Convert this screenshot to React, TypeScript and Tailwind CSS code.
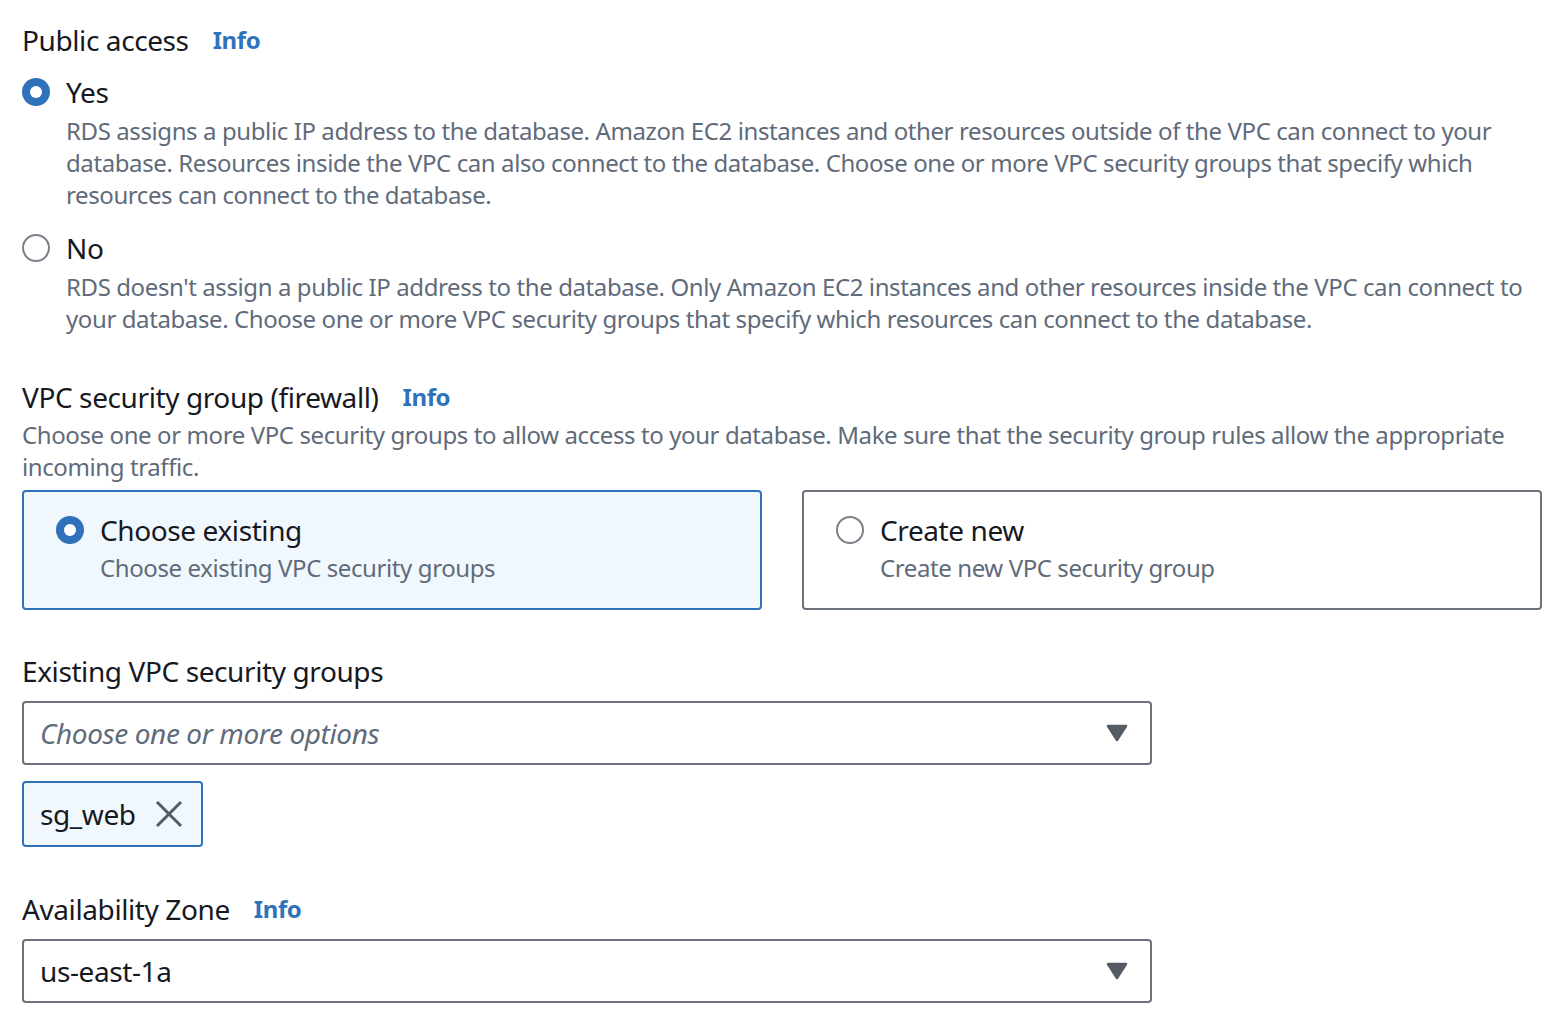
import React from "react";

function Radio({ checked }: { checked: boolean }) {
  return checked ? (
    <span className="flex h-[28px] w-[28px] shrink-0 items-center justify-center rounded-full bg-[#2f72bb]">
      <span className="h-[12px] w-[12px] rounded-full bg-white" />
    </span>
  ) : (
    <span className="h-[28px] w-[28px] shrink-0 rounded-full border-2 border-[#7a818b] bg-white" />
  );
}

function Caret() {
  return (
    <svg width="22" height="18" viewBox="0 0 22 18">
      <path d="M2 2 L20 2 L11 16 Z" fill="#545b64" stroke="#545b64" strokeWidth="2.5" strokeLinejoin="round" />
    </svg>
  );
}

function Info() {
  return <span className="ml-[24px] text-[24px] font-bold text-[#2f72bb]">Info</span>;
}

export default function App() {
  return (
    <div
      className="h-[1032px] w-[1568px] overflow-hidden bg-white pl-[22px] pr-[26px] pt-[20px] tracking-[-0.025em] text-[#16191f]"
      style={{ fontFamily: '"Noto Sans", sans-serif' }}
    >
      <div className="flex h-[40px] items-center text-[28px] leading-[40px]">
        Public access
        <Info />
      </div>

      <div className="mt-[12px] flex h-[40px] items-center gap-[16px] text-[28px]">
        <Radio checked />
        <span>Yes</span>
      </div>
      <p className="mt-[3px] pl-[44px] text-[24px] leading-[32px] text-[#5f6b7a]">
        RDS assigns a public IP address to the database. Amazon EC2 instances and other resources outside of the VPC can connect to your database. Resources inside the VPC can also connect to the database. Choose one or more VPC security groups that specify which resources can connect to the database.
      </p>

      <div className="mt-[17px] flex h-[40px] items-center gap-[16px] text-[28px]">
        <Radio checked={false} />
        <span>No</span>
      </div>
      <p className="mt-[3px] pl-[44px] text-[24px] leading-[32px] text-[#5f6b7a]">
        RDS doesn't assign a public IP address to the database. Only Amazon EC2 instances and other resources inside the VPC can connect to your database. Choose one or more VPC security groups that specify which resources can connect to the database.
      </p>

      <div className="mt-[42px] flex h-[40px] items-center text-[28px]">
        VPC security group (firewall)
        <Info />
      </div>
      <p className="mt-[2px] text-[24px] leading-[32px] text-[#5f6b7a]">
        Choose one or more VPC security groups to allow access to your database. Make sure that the security group rules allow the appropriate incoming traffic.
      </p>

      <div className="mt-[7px] grid grid-cols-2 gap-[40px]">
        <div className="h-[120px] rounded-[4px] border-2 border-[#2f72bb] bg-[#f1f8fd] pl-[32px] pt-[18px]">
          <div className="flex h-[40px] items-center gap-[16px] text-[28px]">
            <Radio checked />
            <span>Choose existing</span>
          </div>
          <div className="mt-[2px] pl-[44px] text-[24px] leading-[32px] text-[#5f6b7a]">
            Choose existing VPC security groups
          </div>
        </div>
        <div className="h-[120px] rounded-[4px] border-2 border-[#6b727c] bg-white pl-[32px] pt-[18px]">
          <div className="flex h-[40px] items-center gap-[16px] text-[28px]">
            <Radio checked={false} />
            <span>Create new</span>
          </div>
          <div className="mt-[2px] pl-[44px] text-[24px] leading-[32px] text-[#5f6b7a]">
            Create new VPC security group
          </div>
        </div>
      </div>

      <div className="mt-[41px] flex h-[40px] items-center text-[28px]">Existing VPC security groups</div>
      <div className="mt-[10px] flex h-[64px] w-[1130px] items-center justify-between rounded-[4px] border-2 border-[#6b727c] pl-[16px] pr-[22px]">
        <span className="text-[28px] italic text-[#5f6b7a]">Choose one or more options</span>
        <Caret />
      </div>
      <div className="mt-[16px] flex h-[66px] w-[181px] items-center justify-between rounded-[4px] border-2 border-[#2f72bb] bg-[#f1f8fd] pl-[16px] pr-[18px]">
        <span className="text-[28px]">sg_web</span>
        <svg width="28" height="28" viewBox="0 0 28 28">
          <path d="M2 2 L26 26 M26 2 L2 26" stroke="#545b64" strokeWidth="3" />
        </svg>
      </div>

      <div className="mt-[42px] flex h-[40px] items-center text-[28px]">
        Availability Zone
        <Info />
      </div>
      <div className="mt-[10px] flex h-[64px] w-[1130px] items-center justify-between rounded-[4px] border-2 border-[#6b727c] pl-[16px] pr-[22px]">
        <span className="text-[28px]">us-east-1a</span>
        <Caret />
      </div>
    </div>
  );
}
